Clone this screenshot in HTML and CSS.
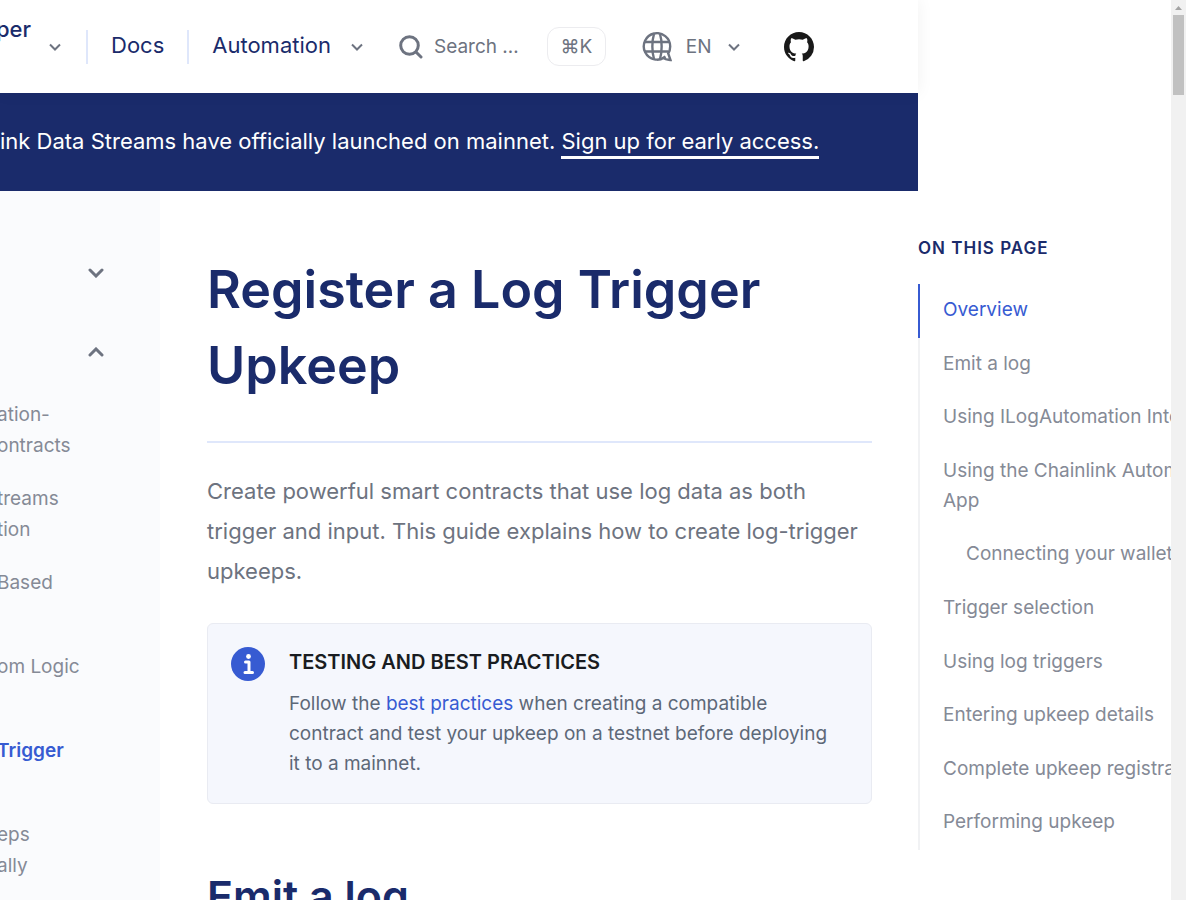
FILE: index.html
```html
<!DOCTYPE html>
<html lang="en">
<head>
<meta charset="utf-8">
<title>Register a Log Trigger Upkeep</title>
<link rel="stylesheet" href="styles.css">
</head>
<body>
<div class="window">
  <div class="shell">
    <header class="header">
      <nav class="nav" aria-label="Primary">
        <a class="nav-link hub" href="#">per</a>
        <svg class="caret" viewBox="0 0 12 8"><path d="M1 1.5l5 5 5-5"/></svg>
        <a class="nav-link docs" href="#">Docs</a>
        <a class="nav-link product" href="#">Automation</a>
        <svg class="caret" viewBox="0 0 12 8"><path d="M1 1.5l5 5 5-5"/></svg>
      </nav>
      <button class="search" type="button">
        <svg class="search-icon" viewBox="0 0 24 24"><circle cx="10.5" cy="10.5" r="8.800"/><path d="M17 17l5 5"/></svg>
        <span>Search …</span>
        <kbd>⌘K</kbd>
      </button>
      <button class="language" type="button">
        <svg class="globe" viewBox="0 0 30 30"><path d="M23.500 24.500A13.200 13.200 0 1 1 28.200 14.500c0 2.500-.7 5-2 7l2.300 6.500c-3-.3-5.500-.5-7-2M22 25.500c-2 1.500-4.500 2.300-7 2.300"/><path d="M2.500 10h25M2.500 19.500h24M12 2C9.800 9 9.800 20 12 27M18 2C20.200 9 20.200 20 18 27"/></svg>
        <span>EN</span>
        <svg class="caret" viewBox="0 0 12 8"><path d="M1 1.5l5 5 5-5"/></svg>
      </button>
      <a class="github" href="#" aria-label="GitHub">
        <svg viewBox="0 0 16 16"><path d="M8 0C3.58 0 0 3.58 0 8c0 3.54 2.29 6.53 5.47 7.59.4.07.55-.17.55-.38 0-.19-.01-.82-.01-1.49-2.01.37-2.53-.49-2.69-.94-.09-.23-.48-.94-.82-1.13-.28-.15-.68-.52-.01-.53.63-.01 1.08.58 1.23.82.72 1.21 1.87.87 2.33.66.07-.52.28-.87.51-1.07-1.78-.2-3.64-.89-3.64-3.95 0-.87.31-1.59.82-2.15-.08-.2-.36-1.02.08-2.12 0 0 .67-.21 2.2.82.64-.18 1.32-.27 2-.27.68 0 1.36.09 2 .27 1.53-1.04 2.2-.82 2.2-.82.44 1.1.16 1.92.08 2.12.51.56.82 1.27.82 2.15 0 3.07-1.87 3.75-3.65 3.95.29.25.54.73.54 1.48 0 1.07-.01 1.93-.01 2.2 0 .21.15.46.55.38A8.013 8.013 0 0016 8c0-4.42-3.58-8-8-8z"/></svg>
      </a>
    </header>

    <div class="banner">
      <p>ink Data Streams have officially launched on mainnet. <a href="#">Sign up for early access.</a></p>
    </div>

    <aside class="sidebar">
      <button class="fold" type="button" aria-label="Expand section"><svg viewBox="0 0 16 10"><path d="M2 2l6 6 6-6"/></svg></button>
      <button class="fold" type="button" aria-label="Collapse section"><svg viewBox="0 0 16 10"><path d="M2 8l6-6 6 6"/></svg></button>
      <ul class="guides">
        <li><a href="#">ation-<br>ontracts</a></li>
        <li><a href="#">treams<br>tion</a></li>
        <li><a href="#">Based</a></li>
        <li><a href="#">om Logic</a></li>
        <li><a class="current" href="#">Trigger</a></li>
        <li><a href="#">eps<br>ally</a></li>
      </ul>
    </aside>

    <main class="article">
      <h1>Register a Log Trigger Upkeep</h1>
      <p class="lead">Create powerful smart contracts that use log data as both trigger and input. This guide explains how to create log-trigger upkeeps.</p>
      <section class="callout">
        <svg class="info" viewBox="0 0 34 34"><circle cx="17" cy="17" r="17"/><circle class="mark" cx="17.5" cy="9.500" r="2.400"/><path class="stem" d="M14.500 15h3.500v10.500M14 25.500h7.500"/></svg>
        <div>
          <h2 class="callout-title">TESTING AND BEST PRACTICES</h2>
          <p>Follow the <a href="#">best practices</a> when creating a compatible contract and test your upkeep on a testnet before deploying it to a mainnet.</p>
        </div>
      </section>
      <h2 class="section-title">Emit a log</h2>
    </main>

    <nav class="toc" aria-labelledby="toc-title">
      <h2 id="toc-title">ON THIS PAGE</h2>
      <ul>
        <li class="active"><a href="#">Overview</a></li>
        <li><a href="#">Emit a log</a></li>
        <li><a href="#">Using ILogAutomation Interface</a></li>
        <li><a href="#">Using the Chainlink Automation<br>App</a></li>
        <li class="nested"><a href="#">Connecting your wallet</a></li>
        <li><a href="#">Trigger selection</a></li>
        <li><a href="#">Using log triggers</a></li>
        <li><a href="#">Entering upkeep details</a></li>
        <li><a href="#">Complete upkeep registration</a></li>
        <li><a href="#">Performing upkeep</a></li>
      </ul>
    </nav>
  </div>
  <div class="scrollbar" aria-hidden="true">
    <svg viewBox="0 0 15 15"><path d="M4 10h7L7.500 6z"/></svg>
    <div class="thumb"></div>
  </div>
</div>
</body>
</html>
```
FILE: styles.css
```css
:root {
  --navy: #1a2b6b;
  --blue: #375bd2;
  --gray: #6d7380;
  --muted: #858a96;
}

* { box-sizing: border-box; }

body {
  margin: 0;
  background: #fff;
  color: var(--gray);
  font-family: Inter, "Liberation Sans", sans-serif;
  font-size: 19px;
  line-height: 30px;
}

h1, h2, p, ul { margin: 0; padding: 0; }
ul { list-style: none; }
a { color: inherit; text-decoration: none; }
svg { display: block; flex: none; fill: none; stroke: currentColor; }

button {
  padding: 0;
  border: 0;
  background: none;
  color: inherit;
  font: inherit;
  cursor: pointer;
}

.window {
  display: flex;
  height: 100vh;
  overflow: hidden;
}

.shell {
  flex: 1;
  min-width: 0;
  overflow: hidden;
  display: grid;
  grid-template-columns: 160px minmax(0, 1fr) 253px;
  grid-template-rows: 93px 98px auto;
}

.header {
  grid-column: 1 / 3;
  position: relative;
  display: flex;
  align-items: center;
  background: #fff;
  box-shadow: 0 0 16px rgba(0, 0, 0, 0.06);
}

.nav { display: flex; align-items: center; }
.nav-link { color: var(--navy); font-size: 22px; line-height: 30px; }
.hub { height: 66px; width: 53px; margin-left: -4px; font-weight: 500; }
.docs {
  height: 34px;
  margin-left: 25px;
  padding: 0 23px;
  border: solid #dfe7fb;
  border-width: 0 2px;
}
.product { height: 34px; padding: 0 20px 0 23px; }
.caret { width: 12px; height: 8px; stroke-width: 2; color: var(--gray); }

.search { display: flex; align-items: center; margin-left: 36px; }
.search-icon { width: 24px; height: 24px; stroke-width: 3; stroke-linecap: round; margin-right: 11px; }
.search kbd {
  margin-left: 28px;
  width: 59px;
  border: 1px solid #ececef;
  border-radius: 12px;
  font: inherit;
  line-height: 37px;
}

.language { display: flex; align-items: center; margin-left: 36px; }
.globe { width: 30px; height: 30px; stroke-width: 2.4; margin-right: 14px; }
.language .caret { margin-left: 16px; }

.github { margin-left: 44px; }
.github svg { width: 30px; height: 30px; fill: #191919; stroke: none; }

.banner {
  grid-column: 1 / 3;
  display: flex;
  align-items: center;
  padding-bottom: 2px;
  background: var(--navy);
  color: #fff;
  font-size: 22px;
  white-space: nowrap;
}
.banner a { padding-bottom: 2px; border-bottom: 3px solid #fff; }

.sidebar {
  grid-column: 1;
  grid-row: 3;
  padding-top: 67px;
  background: #fafbfd;
  color: var(--muted);
  overflow: hidden;
}
.fold {
  display: flex;
  justify-content: flex-end;
  align-items: center;
  width: 104px;
  height: 30px;
  margin-bottom: 49px;
  color: var(--gray);
}
.fold svg { width: 16px; height: 10px; stroke-width: 3; stroke-linecap: round; }
.guides { display: grid; gap: 22px; margin: -17px 0 0 -3px; line-height: 31px; }
.guides li { min-height: 62px; }
.guides .current { color: var(--blue); font-weight: 600; }

.article { grid-row: 3; padding: 61px 46px 0 47px; }

h1 {
  padding-bottom: 37px;
  border-bottom: 2px solid #dfe7fb;
  color: var(--navy);
  font-size: 52px;
  font-weight: 600;
  line-height: 76px;
}

.lead { margin-top: 28px; font-size: 22px; line-height: 40px; }

.callout {
  display: flex;
  gap: 24px;
  margin-top: 32px;
  padding: 23px 32px 24px 23px;
  border: 1px solid #e9ebf2;
  border-radius: 6px;
  background: #f5f7fd;
  color: #5d6878;
}
.info { width: 34px; height: 34px; fill: var(--blue); stroke: none; }
.info .mark { fill: #fff; }
.info .stem { fill: none; stroke: #fff; stroke-width: 3; stroke-linejoin: round; stroke-linecap: round; }
.callout-title { margin-bottom: 12px; color: #191c21; font-size: 20px; font-weight: 600; line-height: 30px; }
.callout a { color: var(--blue); }

.section-title {
  margin-top: 62px;
  color: var(--navy);
  font-size: 43px;
  font-weight: 600;
  line-height: 60px;
}

.toc { grid-row: 3; grid-column: 3; color: var(--muted); white-space: nowrap; padding-top: 42px; }
.toc h2 { color: var(--navy); font-size: 17px; font-weight: 600; letter-spacing: 1px; }
.toc ul {
  display: grid;
  min-height: 566px;
  margin-top: 21px;
  box-shadow: inset 2px 0 #f1f2f4;
}
.toc li { padding: 11px 0 12px 25px; }
.toc .nested { padding-left: 48px; }
.toc .active { color: var(--blue); box-shadow: inset 2px 0 var(--blue); }

.scrollbar { flex: none; width: 15px; background: #f1f1f1; }
.scrollbar svg { width: 15px; height: 15px; fill: #a3a3a3; stroke: none; }
.thumb { height: 80px; margin: 0 2px; background: #c1c1c1; }
```
